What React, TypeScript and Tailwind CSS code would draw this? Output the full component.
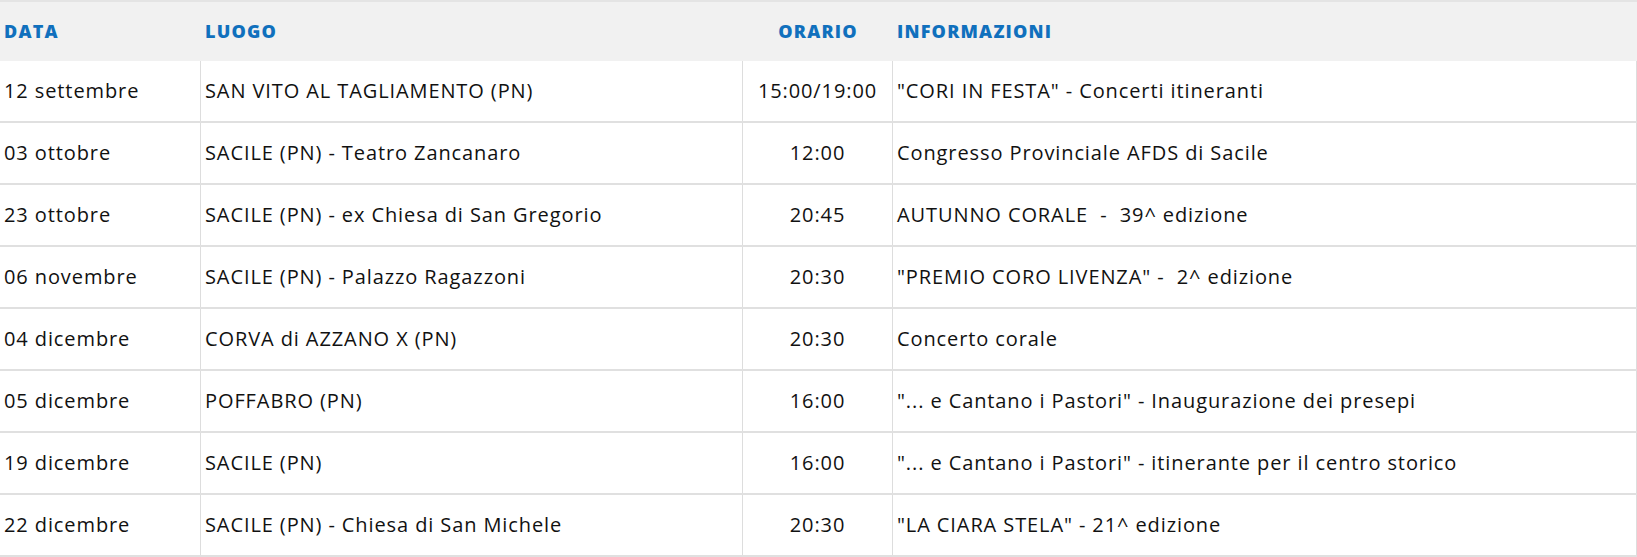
const rows = [
  ['12 settembre', 'SAN VITO AL TAGLIAMENTO (PN)', '15:00/19:00', '"CORI IN FESTA" - Concerti itineranti'],
  ['03 ottobre', 'SACILE (PN) - Teatro Zancanaro', '12:00', 'Congresso Provinciale AFDS di Sacile'],
  ['23 ottobre', 'SACILE (PN) - ex Chiesa di San Gregorio', '20:45', 'AUTUNNO CORALE  -  39^ edizione'],
  ['06 novembre', 'SACILE (PN) - Palazzo Ragazzoni', '20:30', '"PREMIO CORO LIVENZA" -  2^ edizione'],
  ['04 dicembre', 'CORVA di AZZANO X (PN)', '20:30', 'Concerto corale'],
  ['05 dicembre', 'POFFABRO (PN)', '16:00', '"... e Cantano i Pastori" - Inaugurazione dei presepi'],
  ['19 dicembre', 'SACILE (PN)', '16:00', '"... e Cantano i Pastori" - itinerante per il centro storico'],
  ['22 dicembre', 'SACILE (PN) - Chiesa di San Michele', '20:30', '"LA CIARA STELA" - 21^ edizione'],
]

const grid = 'grid grid-cols-[201px_542px_150px_744px]'

export default function App() {
  return (
    <div className="w-[1637px] bg-white font-['Open_Sans',sans-serif] text-[#111111]">
      {/* header */}
      <div className={`${grid} h-[61px] items-center border-t-2 border-[#e4e4e4] bg-[#f1f1f1] text-[18px] font-extrabold tracking-[1.2px] text-[#1070bd]`}>
        <div className="px-1">DATA</div>
        <div className="px-1">LUOGO</div>
        <div className="px-1 text-center">ORARIO</div>
        <div className="px-1">INFORMAZIONI</div>
      </div>

      {rows.map((r, i) => (
        <div key={i} className={`${grid} h-[62px] border-b-2 border-[#e0e0e0] text-[20px] tracking-[0.9px]`}>
          <div className="flex items-center border-r border-[#dddddd] px-1">{r[0]}</div>
          <div className="flex items-center border-r border-[#dddddd] px-1">{r[1]}</div>
          <div className="flex items-center justify-center border-r border-[#dddddd] px-1">{r[2]}</div>
          <div className="flex items-center border-r border-[#dddddd] px-1 whitespace-pre">{r[3]}</div>
        </div>
      ))}
    </div>
  )
}
